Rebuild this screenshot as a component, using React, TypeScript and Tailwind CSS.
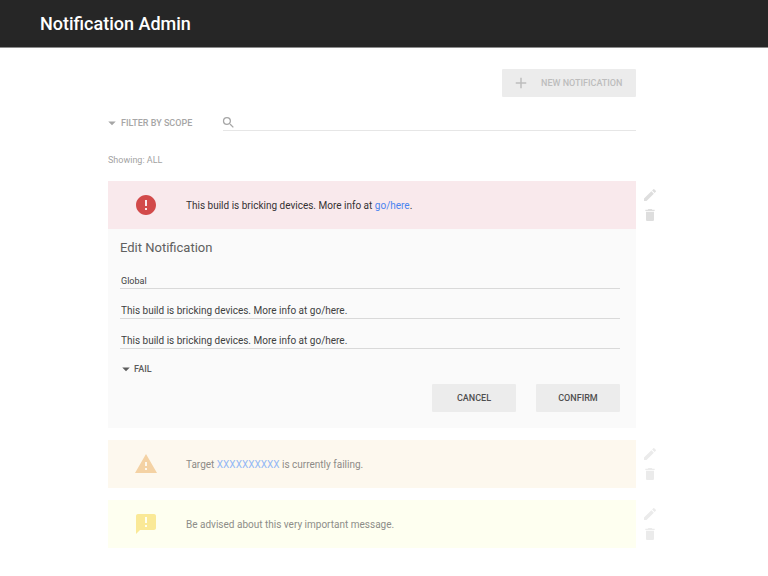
import { useState, type ReactNode } from "react";
import {
  MdAdd,
  MdAnnouncement,
  MdArrowDropDown,
  MdDelete,
  MdEdit,
  MdError,
  MdSearch,
  MdWarning,
} from "react-icons/md";

type RowProps = {
  tone: string;
  icon: ReactNode;
  actionTone: string;
  textTone: string;
  name: string;
  children: ReactNode;
  editor?: ReactNode;
};

function NotificationRow({ tone, icon, actionTone, textTone, name, children, editor }: RowProps) {
  return (
    <li className="flex">
      <article className="min-w-0 flex-1">
        <div className={`flex h-12 items-center ${tone}`}>
          <div className="flex w-[78px] justify-center pr-0.5">{icon}</div>
          <p className={`pt-px text-[10px] leading-4 ${textTone}`}>{children}</p>
        </div>
        {editor}
      </article>
      <div className={`flex w-6 flex-col items-end gap-1 pt-1.5 pr-0.5 ${actionTone}`}>
        <button type="button" aria-label={`Edit ${name}`} className="cursor-pointer">
          <MdEdit className="size-4" />
        </button>
        <button type="button" aria-label={`Delete ${name}`} className="cursor-pointer">
          <MdDelete className="size-4" />
        </button>
      </div>
    </li>
  );
}

function Field({ label, value, small }: { label: string; value: string; small?: boolean }) {
  const [text, setText] = useState(value);
  return (
    <input
      aria-label={label}
      value={text}
      onChange={(e) => setText(e.target.value)}
      className={`h-5 w-full border-b border-[#d9d9d9] px-px pt-1 text-[#3f3f3f] outline-none ${
        small ? "text-[9px]" : "text-[10px]"
      }`}
    />
  );
}

function EditForm() {
  return (
    <form onSubmit={(e) => e.preventDefault()} className="bg-[#fafafa] pt-[11px] pr-4 pb-4 pl-3">
      <h2 className="text-[13px] leading-4 text-[#606060]">Edit Notification</h2>
      <div className="mt-[13px] flex flex-col gap-2.5">
        <Field label="Scope" value="Global" small />
        <Field label="Message" value="This build is bricking devices. More info at go/here." />
        <Field label="Details" value="This build is bricking devices. More info at go/here." />
      </div>
      <div className="relative mt-3 flex items-center text-[#5c5c5c]">
        <MdArrowDropDown className="pointer-events-none absolute -left-[3px] size-[18px]" />
        <select
          aria-label="Severity"
          className="h-4 appearance-none bg-transparent pl-3.5 text-[9px] leading-4 font-medium outline-none"
        >
          <option>FAIL</option>
          <option>WARN</option>
          <option>INFO</option>
        </select>
      </div>
      <div className="mt-[7px] flex justify-end gap-5 text-[9px] font-medium text-[#4f4f4f]">
        <button type="button" className="h-7 w-[84px] cursor-pointer rounded-[1px] bg-[#ececec] pt-0.5">
          CANCEL
        </button>
        <button type="submit" className="h-7 w-[84px] cursor-pointer rounded-[1px] bg-[#ececec] pt-0.5">
          CONFIRM
        </button>
      </div>
    </form>
  );
}

export default function App() {
  return (
    <div className="min-h-screen bg-white font-[Roboto,sans-serif]">
      <header className="flex h-12 items-center border-b border-[#8c8c8c] bg-[#262626] px-10">
        <h1 className="text-[18px] leading-6 font-medium text-white">Notification Admin</h1>
      </header>
      <main className="px-[108px] pt-[21px] pb-6">
        <div className="pr-6">
          <div className="flex justify-end">
            <button
              type="button"
              className="flex h-7 w-[134px] cursor-pointer items-center gap-[11px] rounded-[1px] bg-[#ececec] pl-2.5 text-[9px] font-medium text-[#bdbdbd]"
            >
              <MdAdd className="size-[18px]" />
              <span className="pt-0.5">NEW NOTIFICATION</span>
            </button>
          </div>
          <div className="mt-[18px] flex items-center text-[#a6a6a6]">
            <div className="relative flex w-[115px] items-center">
              <MdArrowDropDown className="pointer-events-none absolute -left-[5px] size-[18px]" />
              <select
                aria-label="Filter by scope"
                className="h-4 appearance-none bg-transparent pl-[13px] text-[9px] leading-4 font-medium outline-none"
              >
                <option>FILTER BY SCOPE</option>
                <option>GLOBAL</option>
                <option>TARGET</option>
              </select>
            </div>
            <label className="flex h-4 flex-1 items-center border-b border-[#e6e6e6]">
              <MdSearch className="-ml-0.5 size-[15px]" />
              <input
                type="search"
                aria-label="Search notifications"
                className="min-w-0 flex-1 text-[10px] outline-none"
              />
            </label>
          </div>
          <p className="mt-[21px] text-[9px] leading-4 text-[#a3a3a3]">Showing: ALL</p>
        </div>
        <ul className="mt-[13px] flex flex-col gap-3">
          <NotificationRow
            name="bricking notification"
            tone="bg-[#f9e9ec]"
            icon={<MdError className="size-6 text-[#d24a4a]" />}
            actionTone="text-[#dedede]"
            textTone="text-[#353133]"
            editor={<EditForm />}
          >
            This build is bricking devices. More info at{" "}
            <a href="#here" className="text-[#4a84f0]">
              go/here
            </a>
            .
          </NotificationRow>
          <NotificationRow
            name="target notification"
            tone="bg-[#fdf8ee]"
            icon={<MdWarning className="size-6 text-[#f4d2a4]" />}
            actionTone="text-[#ebebeb]"
            textTone="text-[#8d8b87]"
          >
            Target{" "}
            <a href="#target" className="text-[#94b9f5]">
              XXXXXXXXXX
            </a>{" "}
            is currently failing.
          </NotificationRow>
          <NotificationRow
            name="advisory notification"
            tone="bg-[#fefff0]"
            icon={<MdAnnouncement className="size-6 text-[#fae997]" />}
            actionTone="text-[#ebebeb]"
            textTone="text-[#8d8d88]"
          >
            Be advised about this very important message.
          </NotificationRow>
        </ul>
      </main>
    </div>
  );
}
